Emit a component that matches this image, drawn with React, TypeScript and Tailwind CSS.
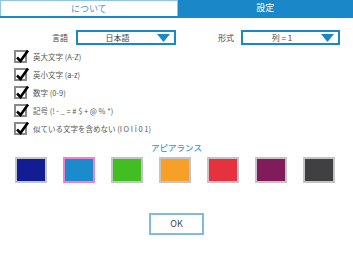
const font = { fontFamily: '"Noto Sans CJK JP", "Liberation Sans", sans-serif' };

const options = [
  '英大文字 (A-Z)',
  '英小文字 (a-z)',
  '数字 (0-9)',
  '記号 (! - _ = # $ + @ % *)',
  '似ている文字を含めない (I O l i 0 1)',
];

const swatches = ['#121d93', '#1b8bcc', '#41bf22', '#f79f26', '#e8313f', '#821b5c', '#404040'];

function Arrow() {
  return (
    <svg width="13" height="8" viewBox="0 0 13 8">
      <path d="M0 0 H13 L6.5 8 Z" fill="#1a87c9" />
    </svg>
  );
}

function Check() {
  return (
    <div className="w-[13px] h-[13px] border-2 border-[#8a8a8a] bg-white relative shrink-0">
      <svg className="absolute -left-[1px] -top-[3px]" width="15" height="15" viewBox="0 0 15 15">
        <path d="M2 8.5 L5.5 12 L13 1.5" fill="none" stroke="#000" strokeWidth="2.6" />
      </svg>
    </div>
  );
}

export default function App() {
  return (
    <div className="w-[353px] h-[253px] bg-white overflow-hidden" style={font}>
      <div className="flex h-[18px] border-b-2 border-[#1a87c9]">
        <div className="flex-1 border border-b-0 border-[#8cc6ea] flex items-center justify-center text-[9px] text-[#3f97d3]">
          について
        </div>
        <div className="flex-1 bg-[#1a87c9] flex items-center justify-center text-[9px] text-white">
          設定
        </div>
      </div>

      <div className="flex items-center h-[15px] mt-[12px] pl-[52px] text-[8px] leading-[10px] text-[#444] whitespace-nowrap">
        <span>言語</span>
        <div className="ml-[8px] w-[100px] h-[15px] border-2 border-[#1a87c9] flex items-center pr-[4px]">
          <span className="flex-1 text-center">日本語</span>
          <Arrow />
        </div>
        <span className="ml-[42px]">形式</span>
        <div className="ml-[7px] w-[99px] h-[15px] border-2 border-[#1a87c9] flex items-center pr-[4px]">
          <span className="flex-1 text-center">列 = 1</span>
          <Arrow />
        </div>
      </div>

      <div className="flex flex-col gap-[5px] mt-[5px] pl-[14px]">
        {options.map((o) => (
          <div key={o} className="flex items-center gap-[6px] h-[13px]">
            <Check />
            <span className="text-[7.5px] leading-[10px] text-[#555] whitespace-nowrap">{o}</span>
          </div>
        ))}
      </div>

      <div className="mt-[6px] text-center text-[8.5px] leading-[12px] font-medium text-[#3f97d3]">アピアランス</div>

      <div className="flex pl-[15px] gap-[16px] mt-[4px]">
        {swatches.map((c, i) => (
          <div
            key={c}
            className={
              i === 1
                ? 'w-[32px] h-[26px] border-2 border-[#f47fcf]'
                : 'w-[32px] h-[26px] border-2 border-[#c2c4c8]'
            }
            style={{ backgroundColor: c }}
          />
        ))}
      </div>

      <div className="flex pl-[149px] mt-[30px]">
        <div className="w-[55px] h-[22px] border-2 border-[#7dbbe3] flex items-center justify-center text-[9px] text-[#444]">
          OK
        </div>
      </div>
    </div>
  );
}
